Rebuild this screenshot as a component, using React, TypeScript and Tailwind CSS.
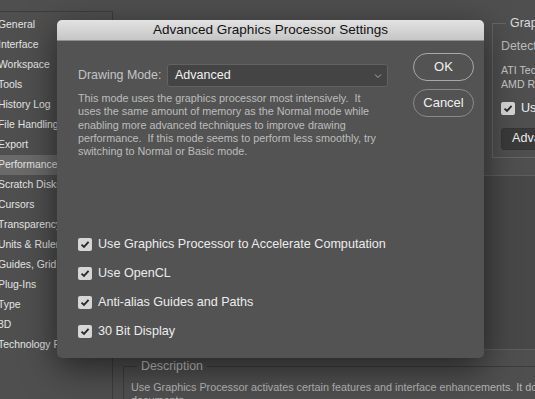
import React from 'react';

const sections = [
    'General',
    'Interface',
    'Workspace',
    'Tools',
    'History Log',
    'File Handling',
    'Export',
    'Performance',
    'Scratch Disks',
    'Cursors',
    'Transparency & Gamut',
    'Units & Rulers',
    'Guides, Grid & Slices',
    'Plug-Ins',
    'Type',
    '3D',
    'Technology Previews',
];

const options = [
    'Use Graphics Processor to Accelerate Computation',
    'Use OpenCL',
    'Anti-alias Guides and Paths',
    '30 Bit Display',
];

const CheckBox = () => (
    <span className="flex h-[13px] w-[14px] shrink-0 items-center justify-center rounded-[2px] bg-[#d6d6d6]">
        <svg width="10" height="9" viewBox="0 0 10 9">
            <path d="M1.5 4.6 L4 7 L8.6 1.8" fill="none" stroke="#2b2b2b" strokeWidth="1.9" />
        </svg>
    </span>
);

const Dialog = () => (
    <div className="absolute left-[57px] top-[20px] flex h-[338px] w-[427px] flex-col overflow-hidden rounded-[5px] bg-[#535353] shadow-[0_10px_35px_rgba(0,0,0,0.55)]">
        <div className="flex h-[21px] items-center justify-center border-b border-[#8f8f8f] bg-gradient-to-b from-[#e2e2e2] to-[#c6c6c6] text-[13.5px] text-[#111]">
            Advanced Graphics Processor Settings
        </div>
        <div className="flex flex-1">
            <div className="flex flex-1 flex-col pl-[21px]">
                <div className="mt-[23px] flex items-center">
                    <span className="w-[89px] text-[12.4px] text-[#c4c4c4]">Drawing Mode:</span>
                    <div className="flex h-[23px] w-[221px] items-center justify-between rounded-[3px] border border-[#626262] bg-[#444] pl-[7px] pr-[5px]">
                        <span className="text-[12.5px] text-[#f2f2f2]">Advanced</span>
                        <svg width="8" height="6" viewBox="0 0 8 6">
                            <path d="M1 1.5 L4 4.5 L7 1.5" fill="none" stroke="#a8a8a8" strokeWidth="1" />
                        </svg>
                    </div>
                </div>
                <p className="mt-[5px] whitespace-pre text-[10.8px] leading-[13.25px] text-[#bdbdbd]">
                    {'This mode uses the graphics processor most intensively.  It'}
                    <br />
                    {'uses the same amount of memory as the Normal mode while'}
                    <br />
                    {'enabling more advanced techniques to improve drawing'}
                    <br />
                    {'performance.  If this mode seems to perform less smoothly, try'}
                    <br />
                    {'switching to Normal or Basic mode.'}
                </p>
                <div className="mt-[79px] flex flex-col gap-[15px]">
                    {options.map((o) => (
                        <div key={o} className="flex h-[14px] items-center gap-[6px]">
                            <CheckBox />
                            <span className="text-[12.6px] text-[#ececec]">{o}</span>
                        </div>
                    ))}
                </div>
            </div>
            <div className="mr-[10px] mt-[12px] flex flex-col gap-[8px]">
                <button className="h-[28px] w-[61px] rounded-full border border-[#a9a9a9] text-[13px] text-[#f0f0f0]">
                    OK
                </button>
                <button className="h-[28px] w-[61px] rounded-full border border-[#8a8a8a] text-[13px] text-[#f0f0f0]">
                    Cancel
                </button>
            </div>
        </div>
    </div>
);

export default function App() {
    return (
        <div className="relative flex h-[399px] w-[535px] flex-col overflow-hidden bg-[#4f4f4f] font-['Liberation_Sans',Arial,sans-serif]">
            <div className="h-[3px] bg-[#ececec]" />
            <div className="flex flex-1">
                <div className="mt-[11px] w-[113px] shrink-0 overflow-hidden border-r border-t border-[#3d3d3d]">
                    <ul className="ml-[-2px] pt-[3px]">
                        {sections.map((s) => (
                            <li
                                key={s}
                                className={`flex h-[20px] items-center whitespace-nowrap text-[10.4px] text-[#e4e4e4] ${
                                    s === 'Performance' ? 'bg-[#6a6a6a]' : ''
                                }`}
                            >
                                {s}
                            </li>
                        ))}
                    </ul>
                </div>
                <div className="flex flex-1 flex-col overflow-hidden pl-[10px]">
                    <div className="mt-[16px] flex gap-[10px]">
                        <fieldset className="h-[142px] w-[359px] shrink-0 border border-[#666]">
                            <legend className="ml-[13px] px-[4px] text-[12px] text-[#d0d0d0]">Memory Usage</legend>
                        </fieldset>
                        <fieldset className="h-[142px] w-[260px] shrink-0 whitespace-nowrap border border-[#666] pl-[8px]">
                            <legend className="ml-[5px] px-[4px] text-[12.4px] leading-[14px] text-[#dcdcdc]">
                                Graphics Processor Settings
                            </legend>
                            <div className="mt-[7px] text-[12.4px] text-[#bcbcbc]">Detected Graphics Processor:</div>
                            <div className="mt-[7px] text-[10.6px] leading-[14px] text-[#c4c4c4]">
                                ATI Technologies Inc.
                                <br />
                                AMD Radeon R9 M395X OpenGL Engine
                            </div>
                            <div className="mt-[8px] flex items-center gap-[6px]">
                                <CheckBox />
                                <span className="text-[12.6px] text-[#ececec]">Use Graphics Processor</span>
                            </div>
                            <div className="mt-[10px] flex h-[22px] w-[130px] items-center rounded-[3px] border border-[#363636] bg-[#3a3a3a] pl-[10px] text-[12.6px] text-[#ececec]">
                                Advanced Settings...
                            </div>
                        </fieldset>
                    </div>
                    <div className="mt-[17px] h-[175px] w-[520px] shrink-0 border-y border-[#5e5e5e] bg-[#484848]" />
                    <fieldset className="mt-[7px] w-[600px] shrink-0 border border-[#3c3c3c] pl-[7px] pt-[5px]">
                        <legend className="ml-[6px] px-[4px] text-[12.4px] text-[#c4c4c4]">Description</legend>
                        <p className="whitespace-nowrap text-[10.8px] leading-[13px] text-[#b5b5b5]">
                            Use Graphics Processor activates certain features and interface enhancements. It does not
                            enable OpenGL on already open
                            <br />
                            documents.
                        </p>
                    </fieldset>
                </div>
            </div>
            <Dialog />
        </div>
    );
}
